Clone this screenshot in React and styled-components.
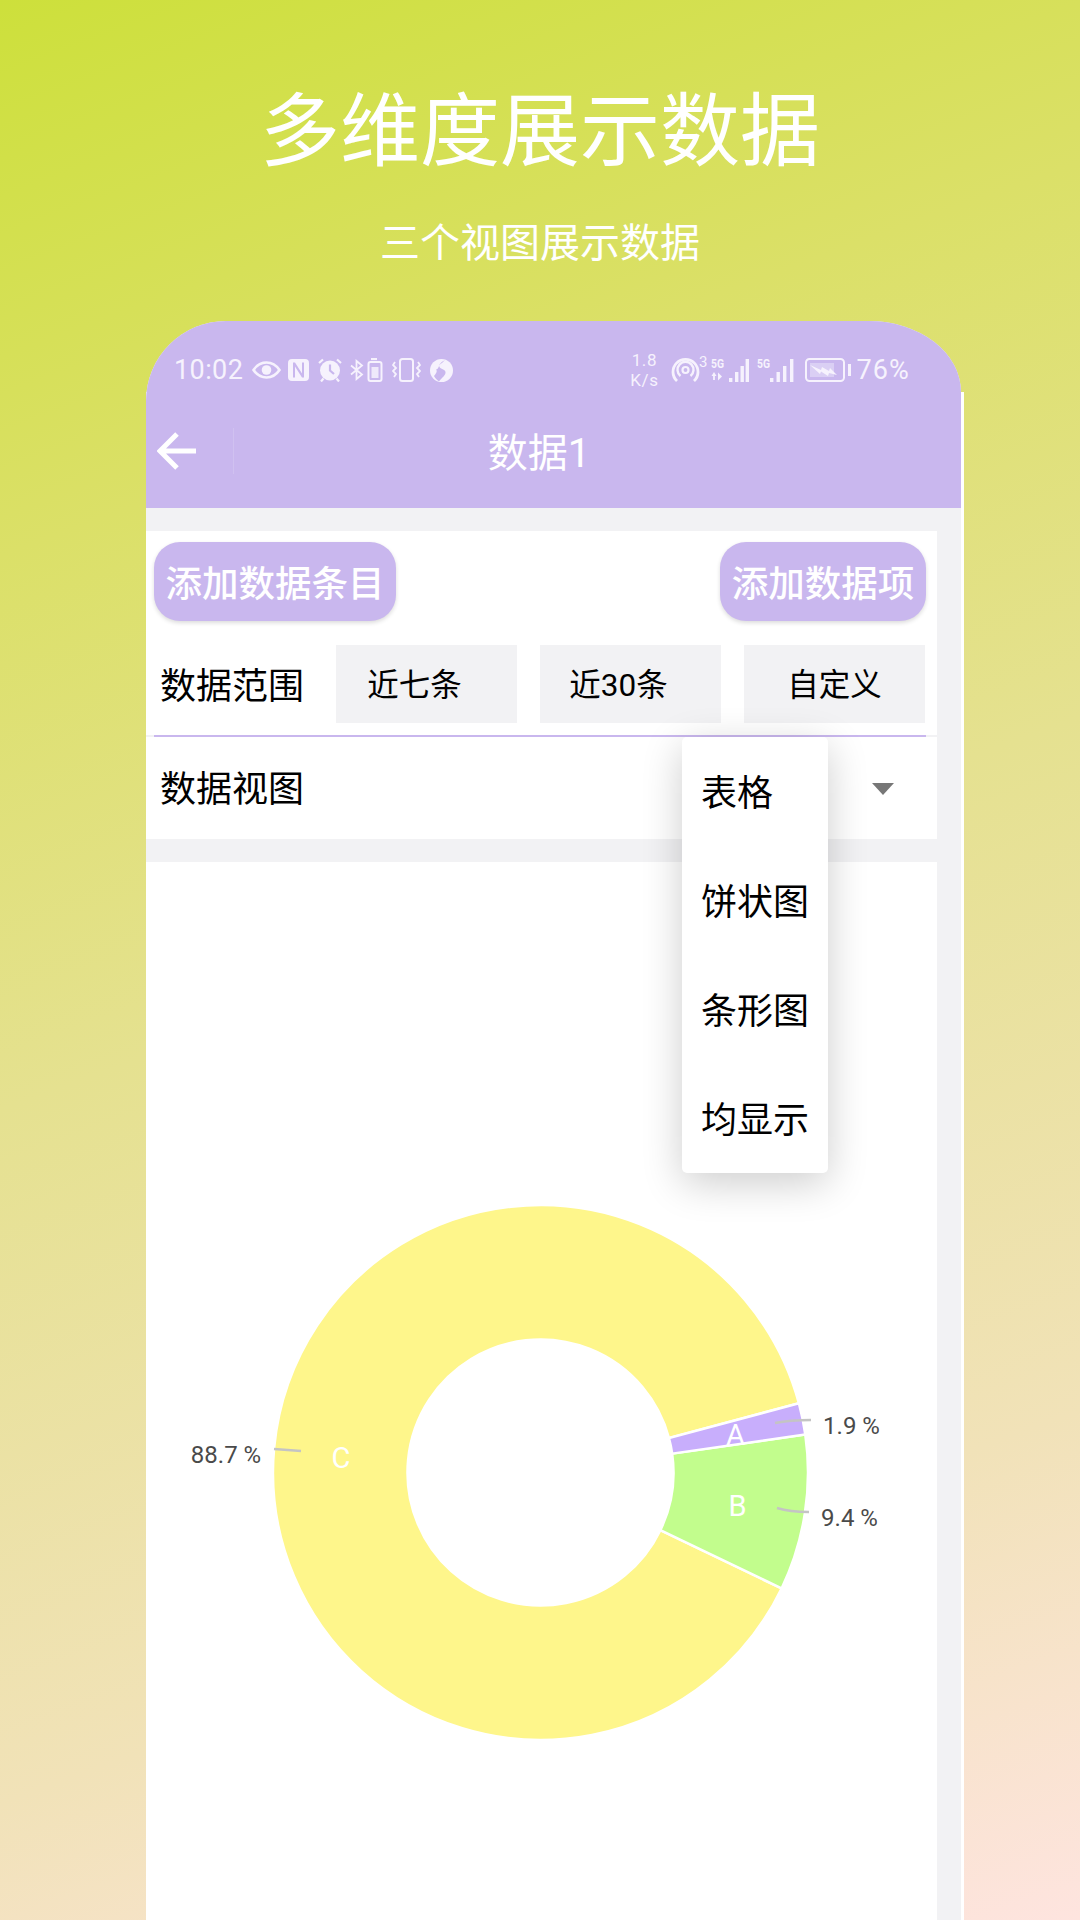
import React from 'react';
import styled, { createGlobalStyle } from 'styled-components';

const PURPLE = '#c9b7ee';
const SOFT_WHITE = '#f6f2fd';
const CJK = `Roboto, 'Noto Sans CJK SC', sans-serif`;

const CX = 540.5;
const CY = 1472.5;
const OUTER = 267.5;
const INNER = 133;

const slices = [
  { name: 'C', color: '#fef68b', from: 15, to: 334.32 },
  { name: 'B', color: '#c2fd8d', from: -25.68, to: 8.16 },
  { name: 'A', color: '#c8aefc', from: 8.16, to: 15 },
];

const labels = [
  { name: 'A', x: 735.5, y: 1445 },
  { name: 'B', x: 737.5, y: 1516 },
  { name: 'C', x: 341, y: 1467.5 },
];

const percents = [
  { text: '1.9 %', x: 851.5, y: 1434, line: 'M775 1423 Q790 1420 811 1420' },
  { text: '9.4 %', x: 849.5, y: 1526, line: 'M777 1508 Q790 1512 809 1512' },
  { text: '88.7 %', x: 226, y: 1463, line: 'M274 1449 L301 1451' },
];

const SIGNAL_HEIGHTS = [4, 10, 16, 23];

const polar = (r, deg) => {
  const a = (deg * Math.PI) / 180;
  return [CX + r * Math.cos(a), CY - r * Math.sin(a)];
};

function slicePath(from, to) {
  const large = to - from > 180 ? 1 : 0;
  const [x1, y1] = polar(OUTER, from);
  const [x2, y2] = polar(OUTER, to);
  const [x3, y3] = polar(INNER, to);
  const [x4, y4] = polar(INNER, from);
  return `M${x1} ${y1} A${OUTER} ${OUTER} 0 ${large} 0 ${x2} ${y2} L${x3} ${y3} A${INNER} ${INNER} 0 ${large} 1 ${x4} ${y4} Z`;
}

const GlobalStyle = createGlobalStyle`
  body {
    margin: 0;
    font-family: ${CJK};
  }
`;

const Page = styled.div`
  width: 1080px;
  height: 1920px;
  overflow: hidden;
  display: flex;
  flex-direction: column;
  align-items: center;
  background: linear-gradient(160deg, #cde03b 0%, #dbe068 24%, #e5e190 48%, #f1e2b8 78%, #fee4df 100%);
`;

const Headline = styled.h1`
  margin: 82px 0 0;
  height: 100px;
  line-height: 100px;
  font-size: 80px;
  font-weight: 400;
  color: #fff;
  text-align: center;
`;

const Subline = styled.div`
  margin-top: 36px;
  height: 52px;
  line-height: 52px;
  font-size: 40px;
  color: #fff;
`;

/* white edge of the device only shows below the rounded corner */
const Phone = styled.div`
  margin: 51px 0 0 30px;
  width: 818px;
  flex: 1;
  min-height: 0;
  background: linear-gradient(transparent 71px, #fff 71px);
`;

const Screen = styled.div`
  width: 815px;
  height: 100%;
  background: #f2f2f4;
  border-radius: 80px 92px 0 0 / 80px 71px 0 0;
`;

const AppBar = styled.header`
  background: ${PURPLE};
  border-radius: 80px 92px 0 0 / 80px 71px 0 0;
  color: #fff;
`;

const StatusBar = styled.div`
  height: 75px;
  box-sizing: border-box;
  padding: 24px 51px 1px 28px;
  display: flex;
  align-items: center;
  justify-content: space-between;
  color: ${SOFT_WHITE};
`;

const StatusGroup = styled.div`
  display: flex;
  align-items: center;
`;

const Clock = styled.span`
  font-size: 27px;
  letter-spacing: 0.4px;
  margin-right: 9px;
`;

const Speed = styled.span`
  font-size: 17px;
  line-height: 20px;
  text-align: center;
  letter-spacing: 0.6px;
  margin-right: 12px;
`;

const BatteryText = styled.span`
  font-size: 27px;
  letter-spacing: 1.1px;
  margin-left: 6px;
`;

const StatusIcon = styled.svg`
  display: block;
  flex: none;
  margin-right: ${(p) => p.$gap || 0}px;
`;

const NavBar = styled.div`
  height: 112px;
  display: flex;
  align-items: center;
  padding-right: 117px;
`;

const BackCell = styled.div`
  width: 88px;
  height: 46px;
  margin-top: -2px;
  box-sizing: border-box;
  padding-left: 11px;
  display: flex;
  align-items: center;
  border-right: 1px solid rgba(255, 255, 255, 0.14);
`;

const NavTitle = styled.div`
  flex: 1;
  text-align: center;
  font-size: 40px;
  margin-top: -4px;
`;

const Card = styled.section`
  width: 791px;
  background: #fff;
  margin-top: 23px;
`;

const ActionRow = styled.div`
  display: flex;
  justify-content: space-between;
  padding: 11px 11px 0 8px;
`;

const ActionButton = styled.button`
  height: 79px;
  width: ${(p) => p.$width}px;
  padding: 0;
  border: 0;
  border-radius: 26px;
  background: ${PURPLE};
  color: #fff;
  font-family: ${CJK};
  font-size: 36.5px;
  font-weight: 500;
  box-shadow: 0 2px 4px rgba(0, 0, 0, 0.14);
`;

const RangeRow = styled.div`
  display: flex;
  align-items: center;
  margin-top: 24px;
  padding: 0 0 0 14px;
`;

const RowLabel = styled.div`
  flex: none;
  font-size: 36px;
  line-height: 50px;
  color: #000;
  white-space: nowrap;
  padding-top: ${(p) => p.$nudge || 0}px;
`;

const RangeOption = styled.div`
  flex: none;
  width: 181px;
  height: 78px;
  box-sizing: border-box;
  margin-left: ${(p) => p.$gap}px;
  padding-right: ${(p) => p.$shift || 0}px;
  padding-bottom: 5px;
  display: flex;
  align-items: center;
  justify-content: center;
  background: #f2f2f4;
  font-size: 31.5px;
  color: #000;
`;

const Divider = styled.div`
  height: 2px;
  margin-top: 12px;
  padding: 0 11px 0 8px;
  background: #f2f2f4;
`;

const DividerLine = styled.div`
  height: 2px;
  background: ${PURPLE};
`;

const ViewRow = styled.div`
  position: relative;
  height: 102px;
  box-sizing: border-box;
  padding: 4px 43px 0 14px;
  display: flex;
  align-items: center;
  justify-content: space-between;
`;

const Caret = styled.div`
  width: 0;
  height: 0;
  margin-top: -2px;
  border-left: 11px solid transparent;
  border-right: 11px solid transparent;
  border-top: 12px solid #777;
`;

const Menu = styled.ul`
  position: absolute;
  z-index: 2;
  top: 0;
  left: 536px;
  width: 146px;
  margin: 0;
  padding: 0;
  list-style: none;
  background: #fff;
  border-radius: 5px;
  box-shadow: 0 10px 40px rgba(0, 0, 0, 0.2);
`;

const MenuItem = styled.li`
  height: 109px;
  box-sizing: border-box;
  padding: 0 0 3px 19px;
  display: flex;
  align-items: center;
  font-size: 36px;
  color: #000;
`;

const ChartCard = styled(Card)`
  height: 1058px;
`;

const Chart = styled.svg`
  display: block;
  width: 791px;
  height: 1058px;
  font-family: Roboto, sans-serif;
`;

const EyeIcon = () => (
  <StatusIcon $gap={7} width="29" height="18" viewBox="0 0 29 18" fill="none" stroke="currentColor">
    <path d="M1.5 9C5 3.8 9.5 1.5 14.5 1.5S24 3.8 27.5 9C24 14.2 19.5 16.5 14.5 16.5S5 14.2 1.5 9Z" strokeWidth="2.6" />
    <circle cx="14.5" cy="9" r="4.8" fill="currentColor" stroke="none" />
  </StatusIcon>
);

const NfcIcon = () => (
  <StatusIcon $gap={9} width="21" height="22" viewBox="0 0 21 22">
    <path
      fillRule="evenodd"
      fill="currentColor"
      d="M4 0H17A4 4 0 0 1 21 4V18A4 4 0 0 1 17 22H4A4 4 0 0 1 0 18V4A4 4 0 0 1 4 0ZM5 3.5V18.5H7V7.5L14 18.5H16V3.5H14V14.5L7 3.5Z"
    />
  </StatusIcon>
);

const AlarmIcon = () => (
  <StatusIcon $gap={8} width="24" height="24" viewBox="0 0 24 24" fill="none" stroke="currentColor">
    <circle cx="12" cy="12.5" r="10" fill="currentColor" stroke="none" />
    <path d="M12 6.5V12.5L16 16" stroke={PURPLE} strokeWidth="2.2" />
    <path d="M1 5L5 1.5M23 5L19 1.5M3 23.5L5.5 20.5M21 23.5L18.5 20.5" strokeWidth="2.2" />
  </StatusIcon>
);

const BluetoothBatteryIcon = () => (
  <StatusIcon $gap={9} width="33" height="24" viewBox="0 0 33 24" fill="none" stroke="currentColor">
    <path d="M1 7.5L12 16.5L6.5 21V3L12 7.5L1 16.5" strokeWidth="1.8" />
    <path d="M21 1H27" strokeWidth="2.2" />
    <rect x="18.5" y="4" width="13" height="19" rx="2" strokeWidth="2" />
    <rect x="21.5" y="9" width="7" height="11" fill="currentColor" stroke="none" opacity="0.85" />
  </StatusIcon>
);

const VibrateIcon = () => (
  <StatusIcon $gap={9} width="29" height="24" viewBox="0 0 29 24" fill="none" stroke="currentColor">
    <rect x="8" y="1" width="13" height="22" rx="2.5" strokeWidth="2" />
    <path d="M3 4L1 7L4 10L1 13L4 16L2 19M26 4L28 7L25 10L28 13L25 16L27 19" strokeWidth="1.8" />
  </StatusIcon>
);

const GlobeIcon = () => (
  <StatusIcon width="23" height="23" viewBox="0 0 23 23">
    <circle cx="11.5" cy="11.5" r="11.5" fill="currentColor" />
    <path
      fill={PURPLE}
      d="M15 1C10.5 3.5 8.5 6 9.5 8C10.5 10 15 10 15.5 13C16 16 12 18.5 9 22.5C7 21 5 19 4 17C6.5 14 7.5 12 6 10.5C9 10.5 8 6 12 4Z"
    />
  </StatusIcon>
);

const HotspotIcon = () => (
  <StatusIcon $gap={4} width="36" height="34" viewBox="0 -4 36 34" fill="none" stroke="currentColor">
    <path d="M6 24A12.5 12.5 0 1 1 23 24" strokeWidth="2.8" />
    <path d="M9.5 19A8 8 0 1 1 19.5 19" strokeWidth="2.4" />
    <circle cx="14.5" cy="13" r="3" strokeWidth="2.2" />
    <text x="28" y="10" fontSize="15" fill="currentColor" stroke="none" fontFamily="Roboto, sans-serif">3</text>
  </StatusIcon>
);

const SignalIcon = ({ arrows, gap, bars }) => (
  <StatusIcon $gap={gap} width="38" height="33" viewBox="0 -4 38 33" fill="currentColor">
    <text x="0" y="10" fontSize="12.5" fontWeight="700" fontFamily="Roboto, sans-serif" textLength="13" lengthAdjust="spacingAndGlyphs">5G</text>
    {arrows && <path d="M3 14L5.5 18H3.9V22H2.1V18H0.5ZM7 14.5L11 18.5L7 22.5Z" />}
    {bars.map((x, i) => (
      <rect key={x} x={x} y={24 - SIGNAL_HEIGHTS[i]} width="3.4" height={SIGNAL_HEIGHTS[i]} />
    ))}
  </StatusIcon>
);

const BatteryIcon = () => (
  <StatusIcon width="46" height="24" viewBox="0 0 46 24" fill="none" stroke="currentColor">
    <rect x="1" y="1" width="38" height="22" rx="3.5" strokeWidth="2" />
    <rect x="5" y="5" width="24" height="14" fill="currentColor" stroke="none" opacity="0.4" />
    <path d="M5 7L16 12L17 9L24 13L25 10L32 17L24 15L23 18L16 13.5L15 16Z" fill="currentColor" stroke="none" />
    <rect x="43" y="6" width="3" height="12" fill="currentColor" stroke="none" />
  </StatusIcon>
);

function App() {
  return (
    <Page>
      <GlobalStyle />
      <Headline>多维度展示数据</Headline>
      <Subline>三个视图展示数据</Subline>
      <Phone>
        <Screen>
          <AppBar>
            <StatusBar>
              <StatusGroup>
                <Clock>10:02</Clock>
                <EyeIcon />
                <NfcIcon />
                <AlarmIcon />
                <BluetoothBatteryIcon />
                <VibrateIcon />
                <GlobeIcon />
              </StatusGroup>
              <StatusGroup>
                <Speed>1.8<br />K/s</Speed>
                <HotspotIcon />
                <SignalIcon arrows gap={8} bars={[18, 24, 29.5, 34.6]} />
                <SignalIcon gap={10} bars={[13, 19.5, 26, 33]} />
                <BatteryIcon />
                <BatteryText>76%</BatteryText>
              </StatusGroup>
            </StatusBar>
            <NavBar>
              <BackCell>
                <svg width="40" height="40" viewBox="0 0 40 40" fill="none" stroke="#fff" strokeWidth="5">
                  <path d="M39 20H5M20 3L3 20L20 37" />
                </svg>
              </BackCell>
              <NavTitle>数据1</NavTitle>
            </NavBar>
          </AppBar>

          <Card>
            <ActionRow>
              <ActionButton $width={242}>添加数据条目</ActionButton>
              <ActionButton $width={206}>添加数据项</ActionButton>
            </ActionRow>
            <RangeRow>
              <RowLabel $nudge={5}>数据范围</RowLabel>
              <RangeOption $gap={32} $shift={24}>近七条</RangeOption>
              <RangeOption $gap={23} $shift={24}>近30条</RangeOption>
              <RangeOption $gap={23}>自定义</RangeOption>
            </RangeRow>
            <Divider><DividerLine /></Divider>
            <ViewRow>
              <RowLabel>数据视图</RowLabel>
              <Caret />
              <Menu>
                <MenuItem>表格</MenuItem>
                <MenuItem>饼状图</MenuItem>
                <MenuItem>条形图</MenuItem>
                <MenuItem>均显示</MenuItem>
              </Menu>
            </ViewRow>
          </Card>

          <ChartCard>
            <Chart viewBox="146 862 791 1058">
              {slices.map((s) => (
                <path key={s.name} d={slicePath(s.from, s.to)} fill={s.color} stroke="#fff" strokeWidth="2.5" />
              ))}
              {percents.map((p) => (
                <g key={p.text}>
                  <path d={p.line} fill="none" stroke="#c4c4c4" strokeWidth="2.5" />
                  <text x={p.x} y={p.y} textAnchor="middle" fontSize="24" fill="#4a4a4a">{p.text}</text>
                </g>
              ))}
              {labels.map((l) => (
                <text key={l.name} x={l.x} y={l.y} textAnchor="middle" fontSize="29" fill="#fff">{l.name}</text>
              ))}
            </Chart>
          </ChartCard>
        </Screen>
      </Phone>
    </Page>
  );
}

export default App;
